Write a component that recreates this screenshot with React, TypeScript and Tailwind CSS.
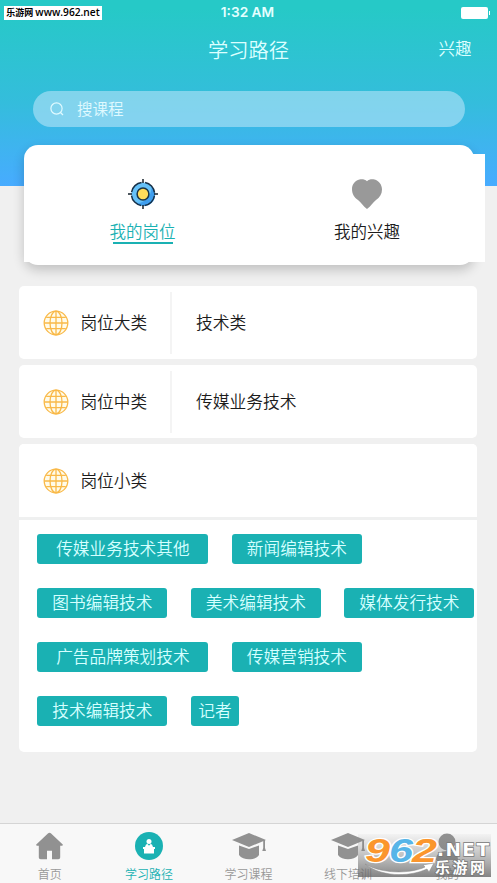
import type { ReactNode } from "react";

const tagRows: { label: string; width: string }[][] = [
  [
    { label: "传媒业务技术其他", width: "w-[171px]" },
    { label: "新闻编辑技术", width: "w-[130px]" },
  ],
  [
    { label: "图书编辑技术", width: "w-[130px]" },
    { label: "美术编辑技术", width: "w-[130px]" },
    { label: "媒体发行技术", width: "w-[130px]" },
  ],
  [
    { label: "广告品牌策划技术", width: "w-[171px]" },
    { label: "传媒营销技术", width: "w-[130px]" },
  ],
  [
    { label: "技术编辑技术", width: "w-[130px]" },
    { label: "记者", width: "w-[48px]" },
  ],
];

function GlobeIcon() {
  return (
    <svg className="h-[26px] w-[26px] shrink-0" viewBox="0 0 26 26" fill="none" stroke="#f9b948" strokeWidth="1.3">
      <circle cx="13" cy="13" r="11.8" fill="#fffbe9" />
      <ellipse cx="13" cy="13" rx="6" ry="11.8" />
      <path d="M13 1.2v23.6M1.2 13h23.6M3.2 7.4h19.6M3.2 18.6h19.6" />
    </svg>
  );
}

function TargetIcon() {
  return (
    <svg className="h-[30px] w-[30px]" viewBox="0 0 30 30">
      <circle cx="15" cy="15" r="11.5" fill="#65c1f8" />
      <path d="M23.800 8A11 11 0 0 1 8 23.800C16 25 23 18 23.800 8z" fill="#3f9eee" />
      <circle cx="15" cy="15" r="11.600" fill="none" stroke="#173047" strokeWidth="1.500" strokeDasharray="14.6 3.62" strokeDashoffset="-1.8" />
      <path d="M15 0v4M15 26v4M0 15h4M26 15h4" stroke="#15202b" strokeWidth="1.5" />
      <circle cx="15" cy="15" r="5.900" fill="#ffdc5a" stroke="#1c3444" strokeWidth="1.500" />
    </svg>
  );
}

function HeartIcon() {
  return (
    <svg className="h-[30px] w-[30px]" viewBox="0 0 30 30" fill="#999">
      <path d="M15 2.200C17 .2 20 0 22.500.6 27 1.800 30 6 30 10.500c0 4.500-2.300 8-6 10.500-3 2.500-5 6-9 9-4-3-6-6.500-9-9C2.300 18.500 0 15 0 10 0 5.500 3 1.500 7.500.5 10-.1 13 .3 15 2.200z" />
    </svg>
  );
}

function CapIcon() {
  return (
    <svg className="h-[28px] w-[34px]" viewBox="0 0 34 28" fill="#919191">
      <path d="M17 1 34 8 17 15 0 8z" />
      <path d="M31.200 8h1.800v8l1 3h-3.700l.9-3z" />
      <path d="M7 13.500l10 3.500 10-3.500V23C25 26 21 27.200 17 27.200S9 26 7 23z" />
    </svg>
  );
}

function HomeIcon() {
  return (
    <svg className="h-[28px] w-[27px]" viewBox="0 0 27 28" fill="#919191">
      <path d="M11.900 1.600a2.300 2.300 0 0 1 3.200 0L26.500 12.200c.6.600.4 1.600-.6 1.600h-1.700v11.400c0 1.300-.7 2-2 2h-6.200v-8.400h-5v8.400H4.800c-1.300 0-2-.7-2-2V13.800H1.100c-1 0-1.200-1-.6-1.600z" />
    </svg>
  );
}

function PathIcon() {
  return (
    <svg className="h-[28px] w-[28px]" viewBox="0 0 28 28">
      <circle cx="14" cy="14" r="14" fill="#1ab1b3" />
      <g fill="white">
        <circle cx="14" cy="9.500" r="2.500" />
        <path d="M11 12.500l1.500-.5 1.500 1.800L15.500 12l1.500.5 1 2.500h2v2h-1v4.500H9V17H8v-2h2z" />
      </g>
    </svg>
  );
}

function MineIcon() {
  return (
    <svg className="h-[28px] w-[28px]" viewBox="0 0 28 28" fill="#919191">
      <circle cx="14" cy="10" r="8.500" />
      <path d="M3 28c0-6 4-9 11-9s11 3 11 9z" />
    </svg>
  );
}

function CategoryRow({ label, value }: { label: string; value?: string }) {
  return (
    <div className="flex h-[73px] items-center rounded-[5px] bg-white pl-[23.500px]">
      <GlobeIcon />
      <span className="-mt-px ml-[11.500px] w-[90px] text-[16.700px] leading-none text-[#1c1c1c]">{label}</span>
      {value && (
        <>
          <span className="h-[62px] w-[2px] bg-[#f4f4f4]" />
          <span className="-mt-px ml-[23.500px] text-[16.800px] leading-none text-[#1c1c1c]">{value}</span>
        </>
      )}
    </div>
  );
}

function Tab({ icon, label, active }: { icon: ReactNode; label: string; active?: boolean }) {
  return (
    <div className="flex min-w-0 flex-1 flex-col items-center pt-2">
      {icon}
      <span className={`mt-2 text-[12px] leading-none ${active ? "text-[#1ab1b3]" : "text-[#999]"}`}>{label}</span>
    </div>
  );
}

function SiteLogo() {
  return (
    <svg className="absolute top-[834px] left-[358px] h-[43px] w-[133px] overflow-visible" viewBox="0 0 133 43">
      <defs>
        <linearGradient id="shade" x1="0" y1="0" x2="0" y2="1">
          <stop offset="0" stopColor="#888" stopOpacity="0.05" />
          <stop offset="1" stopColor="#666" stopOpacity="0.8" />
        </linearGradient>
      </defs>
      <path d="M0 0h133v43H0z" fill="url(#shade)" />
      <g fontFamily="Liberation Sans, sans-serif" fontWeight="700" fontStyle="italic" fontSize="34" stroke="white" strokeWidth="2.500" paintOrder="stroke">
        <text x="7" y="27.500" textLength="25" lengthAdjust="spacingAndGlyphs" fill="#fb962d">9</text>
        <text x="31" y="27.500" textLength="24" lengthAdjust="spacingAndGlyphs" fill="#57b5e8">6</text>
        <text x="54" y="27.500" textLength="25" lengthAdjust="spacingAndGlyphs" fill="#fb962d">2</text>
      </g>
      <path d="M7 30c17 10 45 10 60 3l-2-2 11-2-5 9-2-3c-20 9-47 7-62-5z" fill="white" stroke="#888" strokeWidth=".5" />
      <g fill="white" stroke="#777" strokeWidth="1.500" paintOrder="stroke" fontWeight="700">
        <text x="79" y="21.500" fontFamily="DejaVu Sans, sans-serif" fontSize="18.500" textLength="52" lengthAdjust="spacing">.NET</text>
        <text x="77" y="39" fontFamily="Noto Sans CJK SC, sans-serif" fontSize="15" textLength="50" lengthAdjust="spacing">乐游网</text>
      </g>
    </svg>
  );
}

export default function App() {
  return (
    <div className="relative flex h-[883px] w-[497px] flex-col overflow-hidden bg-[#f0f0f0] font-['Noto_Sans_CJK_SC',sans-serif] font-[350]">
      <header className="flex h-[186px] shrink-0 flex-col bg-linear-to-b from-[#26c9c7] from-5% via-[#34bddc] via-55% to-[#47abff]">
        <div className="grid h-[26px] grid-cols-3 items-center pr-[7px] pl-1">
          <span className="flex h-[14px] w-[98px] items-center justify-center bg-white text-[9px] font-bold whitespace-nowrap text-black">
            乐游网&nbsp;<span className="font-['Open_Sans',sans-serif] text-[10.200px] font-semibold">www.962.net</span>
          </span>
          <span className="pl-px text-center font-['Inter',sans-serif] text-[13.700px] leading-none font-semibold text-[#e5ffff]">1:32 AM</span>
          <span className="flex items-center justify-self-end">
            <span className="h-[12px] w-[27px] rounded-[2px] bg-white" />
            <span className="ml-px h-1 w-px bg-white" />
          </span>
        </div>
        <div className="grid h-[47px] grid-cols-[1fr_auto_1fr] items-center pr-[25.500px] pl-[25.500px] text-[#dcffff]">
          <span />
          <h1 className="text-[20.300px] leading-none">学习路径</h1>
          <span className="-mt-0.5 justify-self-end text-[16.500px] leading-none">兴趣</span>
        </div>
        <div className="mt-[17.500px] ml-[32.500px] flex h-[36px] w-[432px] items-center rounded-full bg-[#ace1f6]/65 pl-[17px] text-[#e0faff]">
          <svg className="h-[14px] w-[14px]" viewBox="0 0 14 14" fill="none" stroke="currentColor" strokeWidth="1.200">
            <circle cx="6.500" cy="6.500" r="5.600" />
            <path d="m10.500 10.500 2.500 2.500" />
          </svg>
          <span className="ml-[13.500px] text-[15.500px] leading-none">搜课程</span>
        </div>
      </header>

      <section className="-mt-[41.500px] ml-[23.500px] h-[120.500px] w-[450px] shrink-0 rounded-[14px] bg-white shadow-[0_5px_12px_rgba(0,0,0,0.2)]">
        <div className="mt-[9.500px] ml-[0.500px] flex h-[108px] w-[461px] rounded-tl-[14px] bg-white pr-[12px]">
          <div className="flex w-[237px] flex-col items-center pt-[25px]">
            <TargetIcon />
            <span className="mt-[13.500px] text-[16.500px] leading-none text-[#1ab1b3]">我的岗位</span>
            <span className="mt-[2.500px] h-[2px] w-[60px] bg-[#1ab1b3]" />
          </div>
          <div className="flex w-[212px] flex-col items-center pt-[25px]">
            <HeartIcon />
            <span className="mt-[13.500px] text-[16.500px] leading-none text-[#1c1c1c]">我的兴趣</span>
          </div>
        </div>
      </section>

      <main className="mt-[21px] ml-[19.400px] flex w-[458px] flex-col gap-1.5">
        <CategoryRow label="岗位大类" value="技术类" />
        <CategoryRow label="岗位中类" value="传媒业务技术" />
        <section className="h-[308px] rounded-[5px] bg-white">
          <CategoryRow label="岗位小类" />
          <div className="h-[3px] bg-[#eff0f0]" />
          <div className="flex flex-col gap-6 pt-[14px] pl-[18px]">
            {tagRows.map((row, i) => (
              <div key={i} className="flex gap-[23.500px]">
                {row.map((tag) => (
                  <span key={tag.label} className={`flex h-[30px] shrink-0 items-center justify-center rounded-[3px] bg-[#1ab1b3] pb-px text-[16.700px] leading-none whitespace-nowrap text-[#d5ffff] ${tag.width}`}>
                    {tag.label}
                  </span>
                ))}
              </div>
            ))}
          </div>
        </section>
      </main>

      <nav className="mt-auto flex h-[60px] shrink-0 border-t border-[#d5d5d5] bg-[#f8f8f8]">
        <Tab icon={<HomeIcon />} label="首页" />
        <Tab icon={<PathIcon />} label="学习路径" active />
        <Tab icon={<CapIcon />} label="学习课程" />
        <Tab icon={<CapIcon />} label="线下培训" />
        <Tab icon={<MineIcon />} label="我的" />
      </nav>
      <SiteLogo />
    </div>
  );
}
